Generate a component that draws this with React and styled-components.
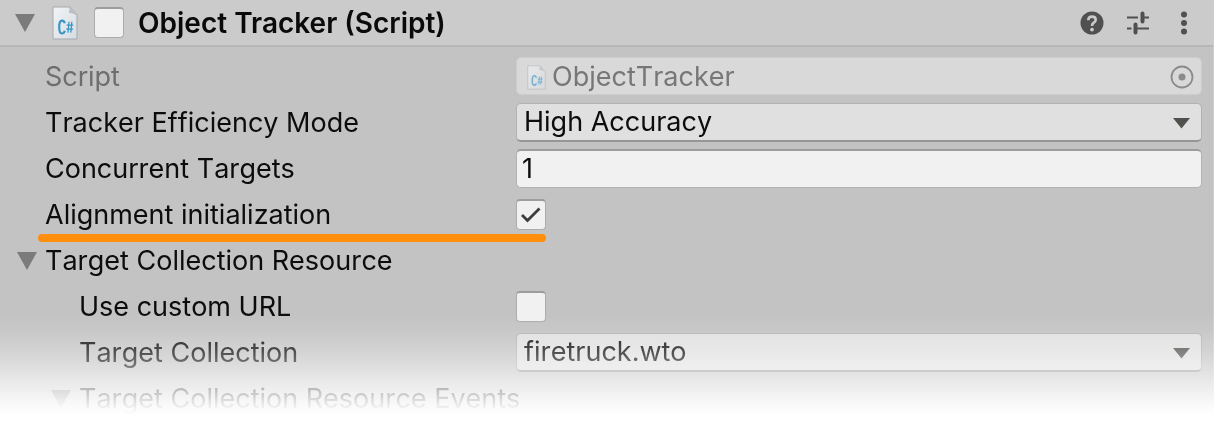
import React, { useState } from "react";
import styled, { createGlobalStyle } from "styled-components";

const GlobalStyle = createGlobalStyle`
  *, *::before, *::after { box-sizing: border-box; }
  body {
    margin: 0;
    background: #ffffff;
    font-family: Inter, "Liberation Sans", sans-serif;
    font-size: 27px;
    font-kerning: none;
    line-height: 36px;
    color: #0c0c0c;
  }
  button, input, select { font: inherit; font-kerning: inherit; color: inherit; margin: 0; }
`;

const Panel = styled.section`
  background: #c3c3c3;
  border-right: 1px solid #cecece;
  padding-bottom: 3px;
  mask-image: linear-gradient(
    to top,
    transparent 5px,
    rgba(0, 0, 0, 0.08) 14px,
    rgba(0, 0, 0, 0.42) 43px,
    rgba(0, 0, 0, 0.72) 68px,
    rgba(0, 0, 0, 0.94) 92px,
    #000 108px
  );
`;

const Header = styled.header`
  display: flex;
  align-items: center;
  height: 47px;
  padding: 0 17px 0 15px;
  background: #cbcbcb;
  border-bottom: 2px solid #b6b6b6;
`;

const Title = styled.h1`
  flex: 1;
  margin: 0;
  font-size: 28px;
  font-kerning: normal;
  line-height: 38px;
  font-weight: 600;
  color: #0a0a0a;
`;

const TitleLabel = styled.label`
  padding-left: 14px;
`;

const Tools = styled.div`
  display: flex;
  align-items: center;
  gap: 22px;
`;

const IconButton = styled.button`
  display: flex;
  padding: 0;
  border: 0;
  background: none;
  color: ${(p) => (p.$dim ? "#8b8b8b" : "#505050")};
  cursor: pointer;
  svg { display: block; }
`;

const Foldout = styled.button`
  display: flex;
  align-items: center;
  padding: ${(p) => (p.$outdent ? "2px 0 0" : "0")};
  border: 0;
  background: none;
  text-align: left;
  white-space: nowrap;
  cursor: pointer;
  gap: 8px;
  margin-left: ${(p) => (p.$outdent ? "-28px" : "0")};
  svg { display: block; flex: none; }
`;

const FileSlot = styled.span`
  display: flex;
  flex: none;
  margin: ${(p) => (p.$small ? "0 6px 0 0" : "0 16px 0 17px")};
  opacity: ${(p) => (p.$small ? 0.6 : 1)};
`;

const Fields = styled.div`
  display: flex;
  flex-direction: column;
  gap: 8px;
  padding: 10px 11px 0 45px;
`;

const Nested = styled.div`
  display: flex;
  flex-direction: column;
  gap: 8px;
  padding-left: 34px;
`;

const Row = styled.div`
  position: relative;
  display: grid;
  grid-template-columns: ${(p) => (p.$nested ? "437px" : "471px")} minmax(0, 1fr);
  grid-template-rows: 38px;
  align-items: center;
`;

const Label = styled.label`
  padding-top: 2px;
  white-space: nowrap;
  color: ${(p) => (p.$dim ? "#6e6e6e" : "inherit")};
`;

const Underline = styled.span`
  position: absolute;
  top: 39px;
  left: -7px;
  width: 508px;
  height: 8px;
  border-radius: 4px;
  background: #ff8e0d;
`;

const TextInput = styled.input`
  width: 100%;
  height: 39px;
  padding: 0 5px;
  border: 1px solid #b2b2b2;
  border-top: 2px solid #9d9d9d;
  border-radius: 5px;
  background: #f1f1f1;
  outline: none;
`;

const ObjectField = styled.div`
  display: flex;
  align-items: center;
  height: 38px;
  padding: 2px 7px 0 10px;
  border: 1px solid #cdcdcd;
  border-radius: 5px;
  background: #d9d9d9;
  color: #777777;
  input {
    flex: 1;
    min-width: 0;
    height: 34px;
    padding: 0;
    border: 0;
    background: none;
    outline: none;
  }
`;

const SelectWrap = styled.div`
  position: relative;
  svg {
    position: absolute;
    right: 12px;
    top: 15px;
    pointer-events: none;
  }
`;

const Select = styled.select`
  display: block;
  appearance: none;
  width: 100%;
  height: 39px;
  padding: 0 40px 0 7px;
  border: 1px solid #b2b2b2;
  border-bottom: 2px solid #969696;
  border-radius: 5px;
  background: #e0e0e0;
  outline: none;
`;

const CheckWrap = styled.span`
  position: relative;
  display: block;
  flex: none;
  width: 30px;
  height: 31px;
  svg {
    position: absolute;
    inset: 0;
    pointer-events: none;
  }
`;

const Check = styled.input`
  display: block;
  appearance: none;
  width: 30px;
  height: 31px;
  border: 1px solid #acacac;
  border-top: 2px solid #9d9d9d;
  border-radius: 4px;
  background: #f1f1f1;
`;

const Triangle = () => (
  <svg width="20" height="18" viewBox="0 0 20 18" aria-hidden="true">
    <path d="M0 0H20L10 18Z" fill="#7b7b7b" />
  </svg>
);

const Caret = () => (
  <svg width="17" height="11" viewBox="0 0 17 11" aria-hidden="true">
    <path d="M0 0H17L8.500 10.500Z" fill="#50514c" />
  </svg>
);

const ScriptFile = ({ width, height }) => (
  <svg width={width} height={height} viewBox="0 0 26 34" aria-hidden="true">
    <defs>
      <linearGradient id="paper" x1="0" y1="0" x2="1" y2="1">
        <stop offset="0" stopColor="#f2f4f6" />
        <stop offset="1" stopColor="#d7dce1" />
      </linearGradient>
    </defs>
    <path d="M1 1H18L25 9V33H1Z" fill="url(#paper)" stroke="#a4a9ad" />
    <path d="M17.500 1L25 9.500Q21 6.500 17 7Z" fill="#b9c0c6" />
    <path
      d="M12.800 17.300Q12 14.500 9.900 14.700Q7.200 15 7.200 21Q7.200 27.300 9.900 27.500Q12 27.600 12.800 24.800"
      fill="none"
      stroke="#3a96c8"
      strokeWidth="2.200"
    />
    <path
      d="M17 15.800L16 26.600M19.800 15.800L18.800 26.600M14.600 19.200H21.300M14.200 23.200H21"
      fill="none"
      stroke="#3a96c8"
      strokeWidth="1.300"
    />
  </svg>
);

const HelpIcon = () => (
  <svg width="24" height="24" viewBox="0 0 24 24" aria-hidden="true">
    <circle cx="12" cy="12" r="11.500" fill="currentColor" />
    <path
      d="M8.300 9.200Q8.300 5.600 12 5.600Q15.700 5.600 15.700 8.700Q15.700 10.300 13.800 11.600Q12 12.700 12 14.900"
      fill="none"
      stroke="#cbcbcb"
      strokeWidth="2.600"
    />
    <circle cx="12" cy="18.600" r="1.900" fill="#cbcbcb" />
  </svg>
);

const PresetIcon = () => (
  <svg width="24" height="24" viewBox="0 0 24 24" aria-hidden="true">
    <g stroke="currentColor" fill="none">
      <path d="M1 6.500H12M17 6.500H23M1 17.500H5.500M10 17.500H23" strokeWidth="2" />
      <path d="M16.500 2.500V10.500M9.500 13.500V21.500" strokeWidth="4" strokeLinecap="round" />
    </g>
  </svg>
);

const MenuIcon = () => (
  <svg width="24" height="24" viewBox="0 0 24 24" aria-hidden="true">
    <g fill="currentColor">
      <circle cx="12" cy="3.500" r="3" />
      <circle cx="12" cy="12" r="3" />
      <circle cx="12" cy="20.500" r="3" />
    </g>
  </svg>
);

const PickerIcon = () => (
  <svg width="24" height="24" viewBox="0 0 24 24" aria-hidden="true">
    <circle cx="12" cy="12" r="10.500" fill="none" stroke="currentColor" strokeWidth="1.800" />
    <circle cx="12" cy="12" r="3.500" fill="currentColor" />
  </svg>
);

function Checkbox({ id, initial = false }) {
  const [on, setOn] = useState(initial);
  return (
    <CheckWrap>
      <Check id={id} type="checkbox" checked={on} onChange={(e) => setOn(e.target.checked)} />
      {on && (
        <svg width="30" height="31" viewBox="0 0 30 31" aria-hidden="true">
          <path d="M6 16L11.500 21.500L23.500 9.500" fill="none" stroke="#3c3c3c" strokeWidth="2.800" />
        </svg>
      )}
    </CheckWrap>
  );
}

function Dropdown({ id, options }) {
  return (
    <SelectWrap>
      <Select id={id}>
        {options.map((o) => (
          <option key={o}>{o}</option>
        ))}
      </Select>
      <Caret />
    </SelectWrap>
  );
}

export default function App() {
  return (
    <>
      <GlobalStyle />
      <Panel>
        <Header>
          <Foldout type="button" aria-label="Collapse component">
            <Triangle />
          </Foldout>
          <FileSlot>
            <ScriptFile width={26} height={34} />
          </FileSlot>
          <Checkbox id="enabled" />
          <Title>
            <TitleLabel htmlFor="enabled">Object Tracker (Script)</TitleLabel>
          </Title>
          <Tools>
            <IconButton type="button" aria-label="Help">
              <HelpIcon />
            </IconButton>
            <IconButton type="button" aria-label="Presets">
              <PresetIcon />
            </IconButton>
            <IconButton type="button" aria-label="More options">
              <MenuIcon />
            </IconButton>
          </Tools>
        </Header>
        <Fields>
          <Row>
            <Label htmlFor="script" $dim>Script</Label>
            <ObjectField>
              <FileSlot $small>
                <ScriptFile width={19} height={25} />
              </FileSlot>
              <input id="script" type="text" defaultValue="ObjectTracker" readOnly />
              <IconButton type="button" aria-label="Pick object" $dim>
                <PickerIcon />
              </IconButton>
            </ObjectField>
          </Row>
          <Row>
            <Label htmlFor="mode">Tracker Efficiency Mode</Label>
            <Dropdown id="mode" options={["High Accuracy"]} />
          </Row>
          <Row>
            <Label htmlFor="targets">Concurrent Targets</Label>
            <TextInput id="targets" type="text" defaultValue="1" />
          </Row>
          <Row>
            <Label htmlFor="alignment">Alignment initialization</Label>
            <Checkbox id="alignment" initial />
            <Underline />
          </Row>
          <Row>
            <Foldout type="button" $outdent>
              <Triangle />
              Target Collection Resource
            </Foldout>
          </Row>
          <Nested>
            <Row $nested>
              <Label htmlFor="custom">Use custom URL</Label>
              <Checkbox id="custom" />
            </Row>
            <Row $nested>
              <Label htmlFor="collection">Target Collection</Label>
              <Dropdown id="collection" options={["firetruck.wto"]} />
            </Row>
            <Row $nested>
              <Foldout type="button" $outdent>
                <Triangle />
                Target Collection Resource Events
              </Foldout>
            </Row>
          </Nested>
        </Fields>
      </Panel>
    </>
  );
}
